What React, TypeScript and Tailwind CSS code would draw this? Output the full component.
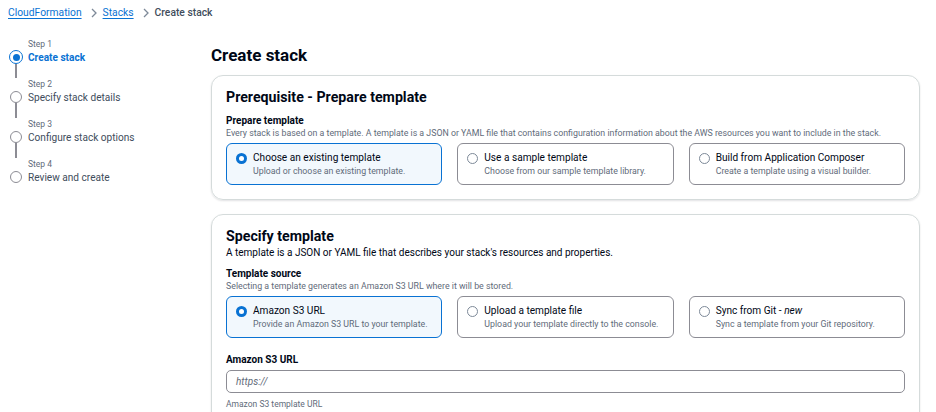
import React from 'react';

const font = { fontFamily: 'Roboto, "Open Sans", Arial, sans-serif' };

interface Tile {
  title: React.ReactNode;
  sub: string;
  selected?: boolean;
}

const Radio: React.FC<{ on?: boolean }> = ({ on }) =>
  on ? (
    <span className="w-[11px] h-[11px] rounded-full bg-[#0972d3] flex items-center justify-center shrink-0">
      <span className="block w-[5px] h-[5px] rounded-full bg-white" />
    </span>
  ) : (
    <span className="block w-[11px] h-[11px] rounded-full border border-[#7d8998] bg-white shrink-0" />
  );

const TileRow: React.FC<{ tiles: Tile[] }> = ({ tiles }) => (
  <div className="grid grid-cols-3 gap-[15px] mt-[4px]">
    {tiles.map((t, i) => (
      <div
        key={i}
        className={`h-[42px] rounded-[6px] border-[1.5px] flex items-start gap-[6px] pl-[9px] pt-[6px] ${
          t.selected ? 'border-[#0972d3] bg-[#f2f8fd]' : 'border-[#8c8c94] bg-white'
        }`}
      >
        <div className="pt-[3px]">
          <Radio on={t.selected} />
        </div>
        <div>
          <p className="text-[10.1px] leading-[15px] text-[#000716]">{t.title}</p>
          <p className="text-[8.8px] leading-[12px] text-[#5f6b7a]">{t.sub}</p>
        </div>
      </div>
    ))}
  </div>
);

const steps = [
  { n: 1, label: 'Create stack', active: true },
  { n: 2, label: 'Specify stack details' },
  { n: 3, label: 'Configure stack options' },
  { n: 4, label: 'Review and create' },
];

const Chevron = () => (
  <svg className="ml-[8px] mr-[5px]" width="8" height="10" viewBox="0 0 8 10" fill="none">
    <path d="M2 1l4 4-4 4" stroke="#7d8998" strokeWidth="1.3" />
  </svg>
);

export default function App() {
  return (
    <div className="w-[936px] h-[412px] overflow-hidden bg-white text-[#000716]" style={font}>
      {/* Breadcrumbs */}
      <div className="flex items-center h-[24px] pl-[8px] pt-[1px] text-[10.3px]">
        <span className="text-[#0972d3] underline underline-offset-2">CloudFormation</span>
        <Chevron />
        <span className="text-[#0972d3] underline underline-offset-2">Stacks</span>
        <Chevron />
        <span className="text-[#414d5c] font-medium">Create stack</span>
      </div>

      <div className="flex">
        {/* Wizard steps */}
        <nav className="w-[211px] shrink-0 pl-[9px] pt-[14px]">
          {steps.map((s, i) => (
            <div key={s.n} className="flex gap-[5px]">
              <div className="flex flex-col items-center w-[14px] pt-[12px]">
                {s.active ? (
                  <span className="w-[14px] h-[14px] rounded-full border-[1.5px] border-[#0972d3] flex items-center justify-center shrink-0">
                    <span className="block w-[7px] h-[7px] rounded-full bg-[#0972d3]" />
                  </span>
                ) : (
                  <span className="block mt-[1px] w-[12px] h-[12px] rounded-full border-[1.5px] border-[#8c8c94] shrink-0" />
                )}
                {i < steps.length - 1 && <span className="block w-[1.5px] flex-1 bg-[#8c8c94]" />}
              </div>
              <div className="h-[40px]">
                <p className="text-[8.5px] leading-[12px] text-[#5f6b7a]">Step {s.n}</p>
                <p
                  className={`text-[10.1px] leading-[15px] ${
                    s.active ? 'text-[#0972d3] font-bold' : 'text-[#414d5c]'
                  }`}
                >
                  {s.label}
                </p>
              </div>
            </div>
          ))}
        </nav>

        {/* Main */}
        <main className="w-[709px] pt-[20px]">
          <h1 className="text-[17px] leading-[22px] font-bold">Create stack</h1>

          <section className="mt-[9px] rounded-[12px] border border-[#d5dbdb] shadow-[0_1px_2px_rgba(0,7,22,0.12)] px-[14px] pt-[11px] pb-[14px]">
            <h2 className="text-[14.2px] leading-[20px] font-bold">Prerequisite - Prepare template</h2>
            <p className="mt-[7px] text-[10px] leading-[13px] font-bold">Prepare template</p>
            <p className="text-[8.8px] leading-[12px] text-[#5f6b7a] whitespace-nowrap">
              Every stack is based on a template. A template is a JSON or YAML file that contains configuration
              information about the AWS resources you want to include in the stack.
            </p>
            <TileRow
              tiles={[
                { title: 'Choose an existing template', sub: 'Upload or choose an existing template.', selected: true },
                { title: 'Use a sample template', sub: 'Choose from our sample template library.' },
                { title: 'Build from Application Composer', sub: 'Create a template using a visual builder.' },
              ]}
            />
          </section>

          <section className="mt-[14px] rounded-[12px] border border-[#d5dbdb] shadow-[0_1px_2px_rgba(0,7,22,0.12)] px-[14px] pt-[11px] pb-[15px]">
            <h2 className="text-[14.2px] leading-[20px] font-bold">Specify template</h2>
            <p className="text-[10px] leading-[13px] text-[#000716]">
              A template is a JSON or YAML file that describes your stack's resources and properties.
            </p>
            <p className="mt-[8px] text-[10px] leading-[13px] font-bold">Template source</p>
            <p className="text-[8.8px] leading-[12px] text-[#5f6b7a]">
              Selecting a template generates an Amazon S3 URL where it will be stored.
            </p>
            <TileRow
              tiles={[
                { title: 'Amazon S3 URL', sub: 'Provide an Amazon S3 URL to your template.', selected: true },
                { title: 'Upload a template file', sub: 'Upload your template directly to the console.' },
                {
                  title: (
                    <>
                      Sync from Git - <i>new</i>
                    </>
                  ),
                  sub: 'Sync a template from your Git repository.',
                },
              ]}
            />
            <p className="mt-[15px] text-[10px] leading-[13px] font-bold">Amazon S3 URL</p>
            <div className="mt-[4px] h-[23px] rounded-[5px] border-[1.5px] border-[#8c8c94] flex items-center px-[9px]">
              <span className="text-[10px] italic text-[#5f6b7a]">https://</span>
            </div>
            <p className="mt-[5px] text-[8.5px] leading-[12px] text-[#5f6b7a]">Amazon S3 template URL</p>
          </section>
        </main>
      </div>
    </div>
  );
}
